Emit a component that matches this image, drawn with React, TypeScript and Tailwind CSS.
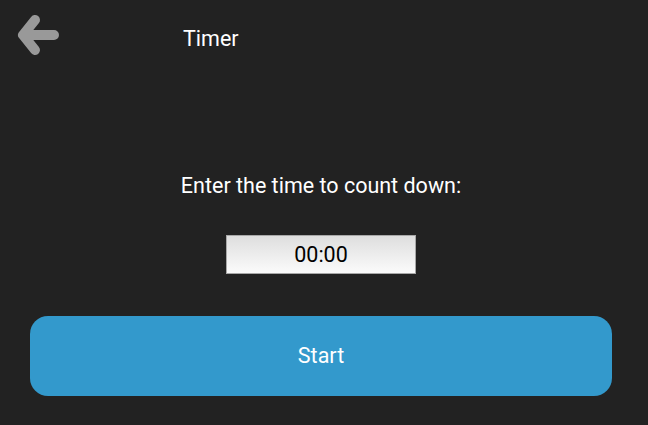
import { useState } from "react";

export default function App() {
  const [time, setTime] = useState("00:00");

  return (
    <div className="w-[648px] h-[425px] bg-[#222222] flex flex-col font-['Roboto',sans-serif] text-white overflow-hidden">
      {/* Header */}
      <div className="flex items-start h-[80px]">
        <svg className="ml-[12px] mt-[11px] w-[48px] h-[48px]" viewBox="12 11 48 48" fill="none" stroke="#999999" strokeWidth={10} strokeLinecap="round" strokeLinejoin="round">
          <path d="M54 35H23M35 20L23 35L35 50" />
        </svg>
        <div className="ml-[123px] mt-[27px] text-[21.5px] leading-[24px]">Timer</div>
      </div>

      {/* Content */}
      <div className="w-[582px] ml-[30px] flex flex-col items-center">
        <p className="mt-[94px] text-[21.5px] leading-[24px]">Enter the time to count down:</p>
        <input
          value={time}
          onChange={(e) => setTime(e.target.value)}
          className="mt-[37px] w-[190px] h-[39px] border border-[#a8a8a8] bg-gradient-to-b from-[#dedede] to-[#fbfbfb] text-black text-center text-[21.5px] outline-none"
        />
        <button className="mt-[42px] w-full h-[80px] rounded-[18px] bg-[#3399cc] text-white text-[21.5px]">
          Start
        </button>
      </div>
    </div>
  );
}
